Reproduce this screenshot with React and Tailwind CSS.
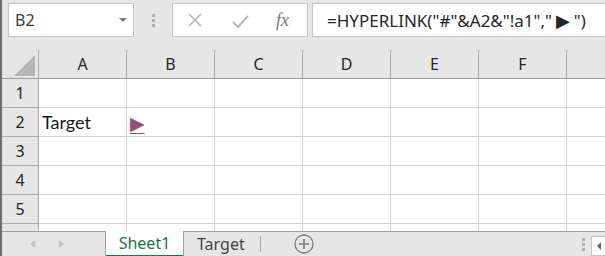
import React from 'react';

const COLS = ['A', 'B', 'C', 'D', 'E', 'F', ''];
const ROWS = [1, 2, 3, 4, 5, 6];

const headFont = { fontFamily: '"Noto Sans", "Open Sans", sans-serif' };
const cellFont = { fontFamily: 'Lato, "Noto Sans", sans-serif' };

const Cell = ({ children }) => (
    <div className="w-[88px] shrink-0 border-r border-b border-[#d4d4d4] bg-white flex items-center">
        {children}
    </div>
);

const App = () => {
    return (
        <div className="w-[605px] h-[256px] overflow-hidden flex flex-col bg-[#e6e6e6] border-l-2 border-[#6e6e6e]" style={headFont}>
            {/* formula bar */}
            <div className="h-[50px] shrink-0 flex items-start pt-[3px]">
                <div className="ml-[6px] w-[126px] shrink-0 h-[34px] bg-white border border-[#c6c6c6] flex items-center justify-between pl-[6px] pr-[6px]">
                    <span className="text-[16px] text-[#3c3c3c]">B2</span>
                    <svg width="8" height="4" viewBox="0 0 8 4"><path d="M0 0h8L4 4z" fill="#777" /></svg>
                </div>
                <div className="w-[38px] shrink-0 h-[34px] flex flex-col items-center justify-center gap-[2px]">
                    <span className="w-[3px] h-[3px] bg-[#b0b0b0]" />
                    <span className="w-[3px] h-[3px] bg-[#b0b0b0]" />
                    <span className="w-[3px] h-[3px] bg-[#b0b0b0]" />
                </div>
                <div className="w-[136px] shrink-0 h-[34px] bg-white border border-[#c6c6c6] flex items-center">
                    <svg className="ml-[14px]" width="16" height="14" viewBox="0 0 16 14">
                        <path d="M2 1l12 12M14 1L2 13" stroke="#b4b4b4" strokeWidth="1.5" fill="none" />
                    </svg>
                    <svg className="ml-[29px] mt-[3px]" width="17" height="13" viewBox="0 0 17 13">
                        <path d="M1 7l5 5L16 1" stroke="#b4b4b4" strokeWidth="2" fill="none" />
                    </svg>
                    <span className="ml-[27px] text-[18px] italic text-[#777]" style={{ fontFamily: '"Liberation Serif", serif' }}>fx</span>
                </div>
                <div className="ml-[4px] flex-1 min-w-0 h-[34px] bg-white border border-[#c6c6c6] border-r-0 flex items-center pl-[14px] overflow-hidden">
                    <span className="text-[17px] text-[#262626] whitespace-nowrap">
                        =HYPERLINK("#"&amp;A2&amp;"!a1","<span className="mx-[4px] text-[18px]" style={{ fontFamily: '"DejaVu Sans", sans-serif' }}>▶</span>")
                    </span>
                </div>
            </div>

            {/* grid */}
            <div className="flex-1 overflow-hidden flex flex-col">
                <div className="h-[29px] shrink-0 flex border-b border-[#9e9e9e]">
                    <div className="w-[37px] shrink-0 border-r border-[#ababab] relative">
                        <svg className="absolute right-[3px] bottom-[2px]" width="21" height="21" viewBox="0 0 21 21">
                            <path d="M21 0V21H0z" fill="#b6b6b6" />
                        </svg>
                    </div>
                    {COLS.map((c, i) => (
                        <div key={i} className="w-[88px] shrink-0 border-r border-[#ababab] flex items-center justify-center text-[16px] text-[#262626]">
                            {c}
                        </div>
                    ))}
                </div>
                {ROWS.map((r) => (
                    <div key={r} className="h-[29px] shrink-0 flex">
                        <div className="w-[37px] shrink-0 border-r border-b border-[#ababab] flex items-center justify-center text-[16px] text-[#262626]">
                            {r < 6 ? r : ''}
                        </div>
                        {COLS.map((c, i) => (
                            <Cell key={i}>
                                {r === 2 && c === 'A' && (
                                    <span className="pl-[3px] text-[18px] text-[#1a1a1a]" style={cellFont}>Target</span>
                                )}
                                {r === 2 && c === 'B' && (
                                    <span className="ml-[3px] mt-[2px] text-[19px] leading-none text-[#954f72] underline underline-offset-[3px]" style={{ fontFamily: '"DejaVu Sans", sans-serif' }}>▶</span>
                                )}
                            </Cell>
                        ))}
                    </div>
                ))}
            </div>

            {/* sheet tabs */}
            <div className="h-[25px] shrink-0 flex items-stretch border-t border-[#9e9e9e]">
                <div className="w-[103px] shrink-0 flex items-center">
                    <svg className="ml-[28px]" width="5" height="8" viewBox="0 0 5 8"><path d="M5 0v8L0 4z" fill="#c4c4c4" /></svg>
                    <svg className="ml-[24px]" width="5" height="8" viewBox="0 0 5 8"><path d="M0 0v8l5-4z" fill="#c4c4c4" /></svg>
                </div>
                <div className="w-[79px] shrink-0 -mt-px bg-white border-l border-r border-[#9e9e9e] flex flex-col">
                    <div className="flex-1 flex items-center justify-center text-[16px] text-[#217346]">Sheet1</div>
                    <div className="h-[2px] bg-[#217346]" />
                </div>
                <div className="w-[76px] shrink-0 flex items-center">
                    <span className="pl-[13px] text-[16px] text-[#444]">Target</span>
                </div>
                <div className="w-px shrink-0 my-[4px] bg-[#ababab]" />
                <div className="w-[86px] shrink-0 flex items-center pl-[33px]">
                    <svg width="20" height="20" viewBox="0 0 20 20">
                        <circle cx="10" cy="10" r="9" stroke="#7a7a7a" strokeWidth="1.3" fill="none" />
                        <path d="M10 5v10M5 10h10" stroke="#7a7a7a" strokeWidth="1.6" />
                    </svg>
                </div>
                <div className="flex-1" />
                <div className="w-[16px] shrink-0 flex flex-col items-center justify-center gap-[2px]">
                    <span className="w-[3px] h-[3px] bg-[#b0b0b0]" />
                    <span className="w-[3px] h-[3px] bg-[#b0b0b0]" />
                    <span className="w-[3px] h-[3px] bg-[#b0b0b0]" />
                </div>
                <div className="w-[14px] shrink-0 mt-[4px] bg-white border border-[#c6c6c6] border-r-0 flex items-center pl-[5px]">
                    <svg width="4" height="8" viewBox="0 0 4 8"><path d="M4 0v8L0 4z" fill="#666" /></svg>
                </div>
            </div>
        </div>
    );
};

export default App;
